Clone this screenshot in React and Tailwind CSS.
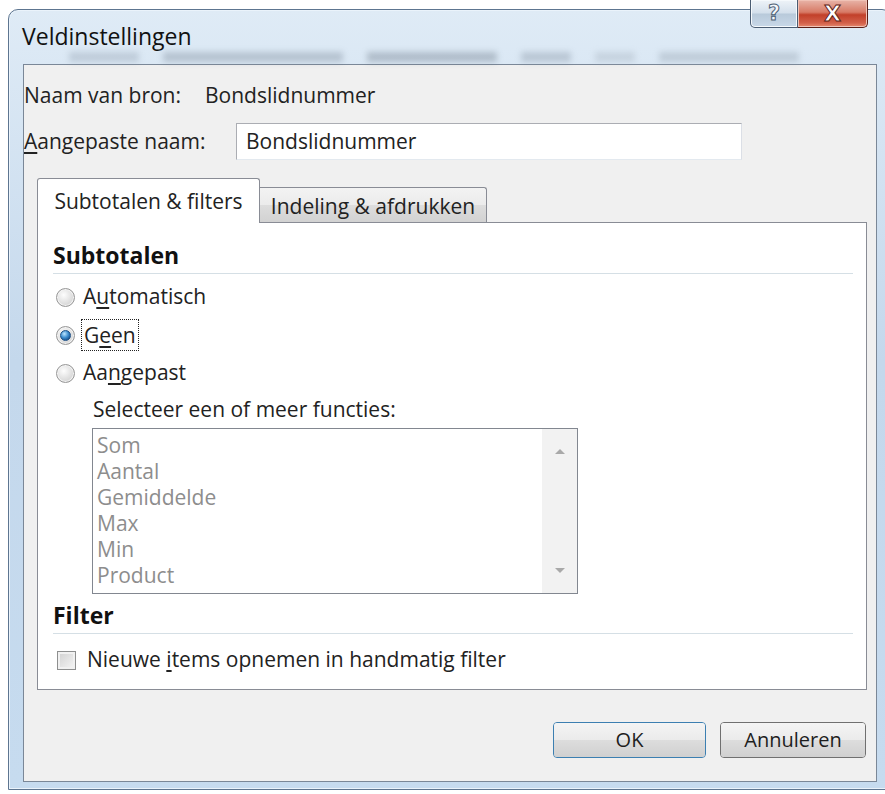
import React from 'react';

// Vista-stijl dialoog "Veldinstellingen" (draaitabel-veld)

const Radio = ({ checked }) => (
  <span className="flex h-[19px] w-[19px] shrink-0 items-center justify-center rounded-full border border-[#979797] bg-[radial-gradient(circle_at_40%_35%,#fdfdfd,#d4d4d4_75%)] shadow-[inset_0_0_0_1px_#f4f4f4]">
    {checked && (
      <span className="h-[11px] w-[11px] rounded-full border border-[#1c4f85] bg-[radial-gradient(circle_at_38%_32%,#bfe6ff,#3f8fd0_45%,#10407a_90%)]" />
    )}
  </span>
);

const Underlined = ({ before, ch, after }) => (
  <span>
    {before}
    <span className="underline underline-offset-[3px]">{ch}</span>
    {after}
  </span>
);

const VistaButton = ({ children, isDefault, width }) => (
  <div
    className={
      'flex h-[36px] items-center justify-center rounded-[4px] border text-[20px] text-[#1e1e1e] ' +
      (isDefault
        ? 'border-[#3c7fb1] shadow-[inset_0_0_0_2px_#b6dcef]'
        : 'border-[#707070] shadow-[inset_0_0_0_1px_#fbfbfb]')
    }
    style={{ width }}
  >
    <div className="flex h-full w-full items-center justify-center rounded-[3px] bg-[linear-gradient(#f4f4f4_0%,#ebebeb_49%,#dddddd_50%,#d0d0d0_100%)]">
      {children}
    </div>
  </div>
);

const functies = ['Som', 'Aantal', 'Gemiddelde', 'Max', 'Min', 'Product'];

export default function App() {
  return (
    <div className="h-[794px] w-[885px] overflow-hidden bg-white pl-[8px] pt-[9px] font-['Open_Sans',sans-serif] text-[21px] text-[#222]">
      {/* venster met glasrand */}
      <div className="flex h-[781px] w-[884px] flex-col rounded-t-[10px] border border-[#5d7590] bg-[linear-gradient(180deg,#dfebf6_0%,#c4d8ec_45%,#c6dbef_100%)] shadow-[inset_0_0_0_1px_#eaf3fb]">
        {/* titelbalk */}
        <div className="relative flex h-[54px] shrink-0 items-start justify-between">
          <div className="pl-[13px] pt-[11px] text-[23px] leading-[30px] text-[#111]">Veldinstellingen</div>
          <div className="pointer-events-none absolute left-[60px] right-[30px] top-[42px] flex h-[10px] gap-[24px] opacity-35 blur-[3px]">
            <div className="h-full w-[70px] bg-[#8a98a8]" />
            <div className="h-full w-[180px] bg-[#6f7d8d]" />
            <div className="h-full w-[130px] bg-[#5e6b79]" />
            <div className="h-full w-[50px] bg-[#7a8898]" />
            <div className="h-full w-[40px] bg-[#a0acb8]" />
            <div className="h-full w-[140px] bg-[#8b98a6]" />
          </div>
          <div className="mr-[23px] -mt-[10px] flex">
            <div className="flex h-[28px] w-[48px] items-center justify-center rounded-bl-[5px] border border-t-0 border-[#4a5c72] bg-[linear-gradient(#eef3f8_0%,#d3dfeb_48%,#b8c9da_52%,#c8d8e8_100%)] shadow-[inset_0_0_0_1px_#f5f9fc]">
              <span className="font-['DejaVu_Sans',sans-serif] text-[21px] font-bold leading-none text-[#f4f7fa] [-webkit-text-stroke:1px_#4b5e74]">?</span>
            </div>
            <div className="flex h-[28px] w-[70px] items-center justify-center rounded-br-[5px] border border-l-0 border-t-0 border-[#5a1f17] bg-[linear-gradient(#e8b4a8_0%,#d77a66_45%,#c2402a_55%,#d2604a_85%,#e68a70_100%)] shadow-[inset_0_0_0_1px_#f0c2b6]">
              <span className="font-['DejaVu_Sans',sans-serif] text-[22px] font-bold leading-none text-white [-webkit-text-stroke:1px_#5c2016]">X</span>
            </div>
          </div>
        </div>

        {/* clientgebied */}
        <div className="mx-[14px] mb-[7px] flex flex-1 flex-col border border-[#7a8797] bg-[#f0f0f0]">
          <div className="mt-[16px] flex h-[30px] items-center">
            <span className="w-[181px]">Naam van bron:</span>
            <span>Bondslidnummer</span>
          </div>

          <div className="mt-[12px] flex h-[37px] items-center">
            <span className="w-[212px]">
              <Underlined before="" ch="A" after="angepaste naam:" />
            </span>
            <div className="flex h-[37px] w-[506px] items-center border border-[#abadb3] border-b-[#e3e9ef] border-r-[#dbdfe6] bg-white pl-[9px]">
              Bondslidnummer
            </div>
          </div>

          {/* tabbladen */}
          <div className="mt-[18px] ml-[13px] flex items-end">
            <div className="relative z-10 -mb-px flex h-[45px] w-[223px] items-start justify-center rounded-t-[3px] border border-b-0 border-[#898c95] bg-white pt-[7px] leading-[30px]">
              Subtotalen &amp; filters
            </div>
            <div className="flex h-[35px] w-[227px] items-start justify-center rounded-tr-[3px] border border-l-0 border-b-0 border-[#898c95] bg-[linear-gradient(#f3f3f3_0%,#ebebeb_50%,#dddddd_51%,#d2d2d2_100%)] pt-[3px] leading-[30px]">
              Indeling &amp; afdrukken
            </div>
          </div>

          <div className="ml-[13px] flex h-[468px] w-[830px] flex-col border border-[#898c95] bg-white pl-[15px] pr-[13px]">
            <div className="mt-[17px] text-[23px] font-bold leading-[30px] text-[#111]">Subtotalen</div>
            <div className="mt-[3px] h-px bg-[#d5dfe5]" />

            <div className="mt-[4px] flex h-[38px] items-center gap-[8px] pl-[3px]">
              <Radio />
              <Underlined before="A" ch="u" after="tomatisch" />
            </div>
            <div className="flex h-[38px] items-center gap-[6px] pl-[3px]">
              <Radio checked />
              <span className="border border-dotted border-[#222] px-[2px] leading-[30px]">
                <Underlined before="G" ch="e" after="en" />
              </span>
            </div>
            <div className="flex h-[38px] items-center gap-[8px] pl-[3px]">
              <Radio />
              <Underlined before="Aa" ch="n" after="gepast" />
            </div>
            <div className="flex h-[36px] items-center pl-[40px]">Selecteer een of meer functies:</div>

            <div className="ml-[39px] flex h-[166px] w-[486px] border border-[#828790] bg-white">
              <div className="flex-1 pl-[4px] pt-[3px] leading-[26px] text-[#8d8d8d]">
                {functies.map((f) => (
                  <div key={f}>{f}</div>
                ))}
              </div>
              <div className="flex w-[35px] flex-col items-center justify-between bg-[#f2f2f2] py-[20px]">
                <span className="h-0 w-0 border-x-[5px] border-b-[5px] border-x-transparent border-b-[#a9a9a9]" />
                <span className="h-0 w-0 border-x-[5px] border-t-[5px] border-x-transparent border-t-[#a9a9a9]" />
              </div>
            </div>

            <div className="mt-[6px] text-[23px] font-bold leading-[30px] text-[#111]">Filter</div>
            <div className="mt-[3px] h-px bg-[#d5dfe5]" />

            <div className="mt-[11px] flex h-[30px] items-center gap-[11px] pl-[4px]">
              <span className="h-[19px] w-[19px] shrink-0 border border-[#8e8f8f] bg-[linear-gradient(135deg,#d0d0d0,#f6f6f6)] shadow-[inset_0_0_0_2px_#f1f1f1]" />
              <Underlined before="Nieuwe " ch="i" after="tems opnemen in handmatig filter" />
            </div>
          </div>

          <div className="mt-[32px] mr-[10px] flex justify-end gap-[14px]">
            <VistaButton isDefault width={153}>OK</VistaButton>
            <VistaButton width={146}>Annuleren</VistaButton>
          </div>
        </div>
      </div>
    </div>
  );
}
